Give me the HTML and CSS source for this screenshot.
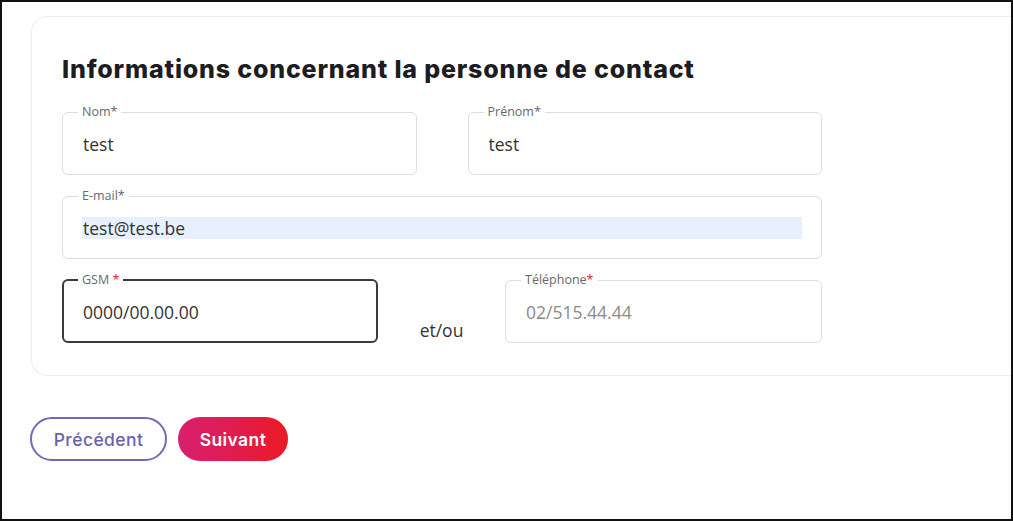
FILE: index.html
```html
<!DOCTYPE html>
<html lang="fr">
<head>
<meta charset="utf-8">
<title>Informations concernant la personne de contact</title>
<link rel="stylesheet" href="styles.css">
</head>
<body>
<div class="frame">
  <section class="card">
    <h2 class="title">Informations concernant la personne de contact</h2>
    <div class="form">
      <div class="row two">
        <fieldset class="field">
          <legend>Nom*</legend>
          <input class="input" type="text" value="test">
        </fieldset>
        <fieldset class="field">
          <legend>Prénom*</legend>
          <input class="input" type="text" value="test">
        </fieldset>
      </div>
      <div class="row">
        <fieldset class="field">
          <legend>E-mail*</legend>
          <input class="input autofill" type="text" value="test@test.be">
        </fieldset>
      </div>
      <div class="row phones">
        <fieldset class="field focused">
          <legend>GSM <span class="req">*</span></legend>
          <input class="input" type="text" value="0000/00.00.00">
        </fieldset>
        <span class="andor">et/ou</span>
        <fieldset class="field">
          <legend>Téléphone<span class="req">*</span></legend>
          <input class="input" type="text" placeholder="02/515.44.44">
        </fieldset>
      </div>
    </div>
  </section>
  <div class="actions">
    <button class="btn btn-outline" type="button">Précédent</button>
    <button class="btn btn-primary" type="button">Suivant</button>
  </div>
</div>
</body>
</html>
```
FILE: styles.css
```css
* { box-sizing: border-box; }
html, body { margin: 0; padding: 0; background: #fff; }
body { font-family: "Open Sans", "Liberation Sans", sans-serif; }

.frame {
  width: 1013px;
  height: 521px;
  border: 2px solid #111;
  overflow: hidden;
  background: #fff;
}

.card {
  margin: 14px 0 0 29px;
  border: 1px solid #eceef6;
  border-right: none;
  border-radius: 16px 0 0 16px;
  padding: 36px 0 32px 30px;
}

.title {
  margin: 0 0 18px;
  font-family: Inter, "Noto Sans", sans-serif;
  font-weight: 800;
  font-size: 25px;
  line-height: 33px;
  color: #1c1c22;
  letter-spacing: 0.82px;
  white-space: nowrap;
}

.form {
  width: 760px;
  display: grid;
  row-gap: 13px;
}

.row.two {
  display: grid;
  grid-template-columns: 1fr 1fr;
  column-gap: 51px;
}

.row.phones {
  display: grid;
  grid-template-columns: 316px 1fr 317px;
}

.field {
  margin: 0;
  padding: 0 19px;
  min-width: 0;
  border: 1px solid #dcdde3;
  border-radius: 6px;
}

.field legend {
  margin-left: -4px;
  padding: 0 4px;
  font-size: 12.5px;
  line-height: 16px;
  color: #666870;
}

.field .req { color: #e5242b; }

.input {
  display: block;
  width: 100%;
  height: 22px;
  margin: 13px 0 19px;
  padding: 0 0 0 1px;
  border: 0;
  outline: none;
  background: transparent;
  font-family: "Open Sans", "Liberation Sans", sans-serif;
  font-size: 17.5px;
  line-height: 22px;
  color: #333;
}

.input::placeholder { color: #8b8b8b; }

.input.autofill { background: #e8f0fe; }

.field.focused {
  border: 2px solid #3a3a44;
  padding: 0 18px;
}

.field.focused .input { margin-bottom: 18px; }

.andor {
  align-self: end;
  justify-self: center;
  padding-bottom: 2px;
  font-size: 17.5px;
  line-height: 22px;
  color: #333;
}

.actions {
  display: flex;
  gap: 11px;
  margin: 41px 0 0 28px;
}

.btn {
  height: 44px;
  border-radius: 22px;
  font-family: Inter, "Noto Sans", sans-serif;
  font-size: 17.5px;
  letter-spacing: 0.4px;
  cursor: pointer;
}

.btn-outline {
  width: 137px;
  background: #fff;
  border: 2px solid #7468b6;
  color: #6a61ad;
  font-weight: 500;
}

.btn-primary {
  width: 110px;
  border: none;
  background: linear-gradient(90deg, #d81f6f 0%, #e21b48 60%, #ec1a24 100%);
  color: #fff;
  font-weight: 600;
}
```
